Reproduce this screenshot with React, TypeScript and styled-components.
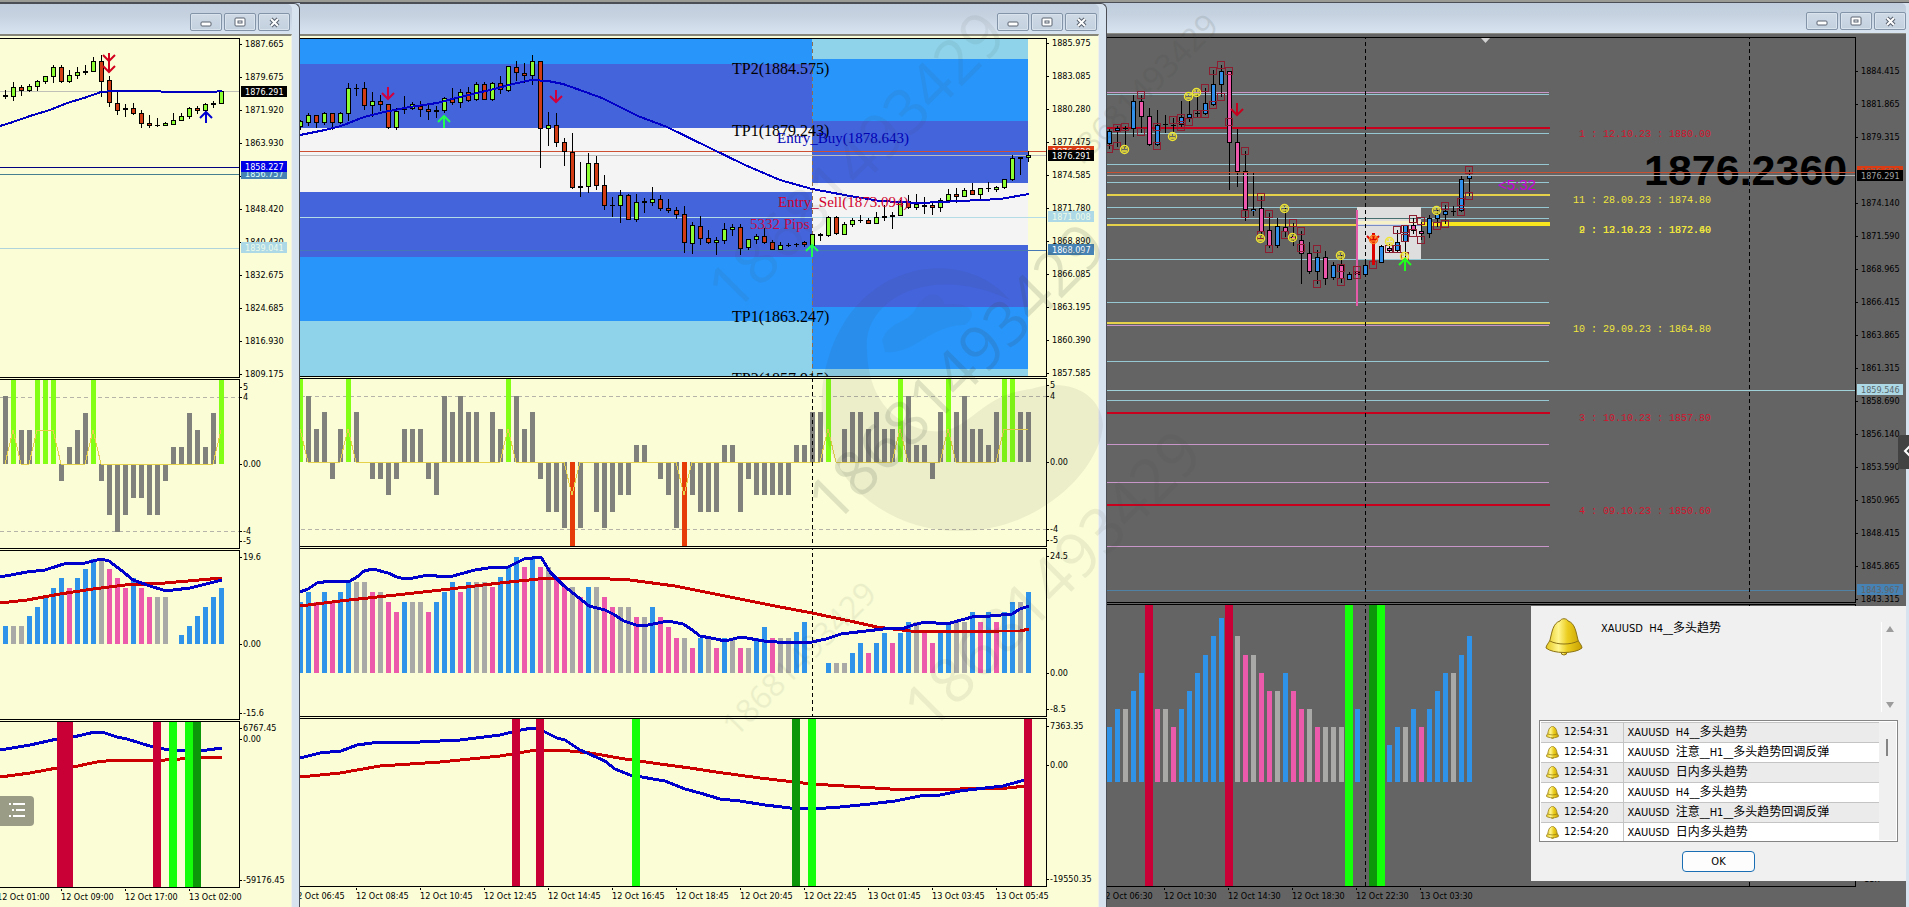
import React from "react";
import styled, { createGlobalStyle, css } from "styled-components";

const FONT_UI = '"DejaVu Sans Condensed", "Noto Sans CJK SC", sans-serif';
const CREAM = "#fafdd5";
const SLATE = "#646464";

const GlobalStyle = createGlobalStyle`
  *, *::before, *::after { box-sizing: border-box; }
  body { margin: 0; background: ${CREAM}; font-family: ${FONT_UI}; overflow: hidden; }
`;

/* ---------- layout ---------- */

const Desk = styled.main`
  position: relative;
  display: flex;
  flex-direction: column;
  min-height: 100vh;
  overflow: hidden;
`;

const TopEdge = styled.div`
  height: 3px;
  background: #9b9b96;
  border-bottom: 1px solid #4b4f55;
`;

const Windows = styled.div`
  flex: 1;
  display: grid;
  grid-template-columns: 300px 807px minmax(0, 1fr);
  background: linear-gradient(#c0cddc, #d8e4f0 30px, ${SLATE} 31px);
`;

const Frame = styled.section<{ $dark?: boolean }>`
  position: relative;
  display: flex;
  flex-direction: column;
  min-width: 0;
  background: #d8e3f0;
  ${(p) =>
    p.$dark
      ? css`
          padding-right: 3px;
        `
      : css`
          border-top: 1px solid #4b4f55;
          border-right: 1px solid #4b4f55;
          border-top-right-radius: 6px;
          padding-right: 7px;
        `}
`;

const TitleBar = styled.header<{ $dark?: boolean }>`
  display: flex;
  justify-content: flex-end;
  gap: 2px;
  height: 30px;
  padding-top: 9px;
  padding-right: ${(p) => (p.$dark ? 0 : 2)}px;
  background: linear-gradient(#c0cddc, #c6d2e0 40%, #d8e4f0);
  border-top-right-radius: 5px;
`;

const CaptionButton = styled.button`
  display: grid;
  place-items: center;
  width: 32px;
  height: 18px;
  padding: 0;
  border: 1px solid #8494a8;
  border-radius: 2px;
  background: linear-gradient(#cfdae6, #c3d0de);
  box-shadow: inset 0 0 0 1px #d9e3ee;
`;

const Client = styled.div<{ $dark?: boolean }>`
  flex: 1;
  display: flex;
  flex-direction: column;
  gap: 1px;
  min-width: 0;
  background: ${(p) => (p.$dark ? SLATE : CREAM)};
  border-top: ${(p) => (p.$dark ? "1px solid #8c8c86" : "2px solid #85857a")};
  border-right: ${(p) => (p.$dark ? "0" : "1px solid #f1f1e8")};
  padding-top: ${(p) => (p.$dark ? 3 : 2)}px;
`;

const PaneRow = styled.div<{ $height: number }>`
  display: flex;
  height: ${(p) => p.$height}px;
`;

const PlotBox = styled.div`
  flex: 1;
  min-width: 0;
  border: solid #000;
  border-width: 1px 1px 1px 0;
  overflow: hidden;
`;

const Drawing = styled.svg`
  display: block;
  width: 100%;
  height: 100%;
  shape-rendering: crispEdges;
`;

const AxisBox = styled.div<{ $width: number }>`
  flex: 0 0 ${(p) => p.$width}px;
  overflow: hidden;
`;

const AxisText = styled.text`
  font-family: "DejaVu Sans Condensed", sans-serif;
  font-size: 9px;
`;

const TimeAxis = styled.div<{ $shift: number }>`
  display: flex;
  overflow: hidden;
  height: 18px;
  & > :first-child { margin-left: ${(p) => -p.$shift}px; }
`;

const TimeLabel = styled.time`
  position: relative;
  flex: 0 0 64px;
  font-size: 9px;
  line-height: 16px;
  white-space: nowrap;
  &::before {
    content: "";
    position: absolute;
    left: 0;
    top: -1px;
    width: 1px;
    height: 3px;
    background: #000;
  }
`;

/* ---------- chart parts ---------- */

const INK = {
  up: "#8cff32", down: "#d23c14", bull: "#2f8fea", bear: "#ee58ac",
  crimson: "#c80036", lime: "#14ff0a", forest: "#0c960a",
  b: "#2f93ea", g: "#a9a9a7", p: "#ec5aac",
  blue: "#0000cc", red: "#cc0000", gray: "#80807c", chart: "#82ff14",
};

type Origin = { x: number; y: number };
type Label = [string, number];
type Tag = { text: string; y: number; fill: string; color: string };

interface PaneProps {
  origin: Origin;
  height: number;
  labels: Label[];
  tags?: Tag[];
  axisX: number;
  axisWidth?: number;
  inset?: number;
  children: React.ReactNode;
}

function Pane({ origin, height, labels, tags = [], axisX, axisWidth = 51, inset = 2, children }: PaneProps) {
  return (
    <PaneRow $height={height}>
      <PlotBox>
        <Drawing>
          <g transform={`translate(${-origin.x} ${-origin.y - 1})`}>{children}</g>
        </Drawing>
      </PlotBox>
      <AxisBox $width={axisWidth}>
        <Drawing>
          <g transform={`translate(${-axisX} ${-origin.y})`}>
            {labels.map(([text, y]) => (
              <g key={text}>
                <rect x={axisX} y={y} width="2" height="1" />
                <AxisText x={axisX + inset} y={y + 3}>{text}</AxisText>
              </g>
            ))}
            {tags.map((t) => (
              <g key={t.text}>
                <rect x={axisX + 1} y={t.y - 5} width="46" height="11" fill={t.fill} />
                <AxisText x={axisX + 5} y={t.y + 4} fill={t.color}>{t.text}</AxisText>
              </g>
            ))}
          </g>
        </Drawing>
      </AxisBox>
    </PaneRow>
  );
}

/* one candle: high, body top, body bottom, low, kind */
type Kind = "u" | "d" | "n" | "b" | "p";
type Candle = [number, number, number, number, Kind];
const BODY: Record<Kind, string> = { u: INK.up, d: INK.down, n: "#000", b: INK.bull, p: INK.bear };

function Candles({ x0, data }: { x0: number; data: Candle[] }) {
  return (
    <g>
      {data.map(([hi, top, bottom, lo, kind], i) => {
        const x = x0 + i * 8;
        if (lo === 0) return null;
        return (
          <g key={i}>
            <rect x={x} y={hi} width="1" height={lo - hi + 1} />
            <rect x={x - 2} y={top} width="5" height={Math.max(1, bottom - top + 1)} />
            {kind !== "n" && (
              <rect x={x - 1} y={top + 1} width="3" height={Math.max(1, bottom - top - 1)} fill={BODY[kind]} />
            )}
          </g>
        );
      })}
    </g>
  );
}

function Line({ pts, color, width = 3 }: { pts: string; color: string; width?: number }) {
  return <polyline points={pts} fill="none" stroke={color} strokeWidth={width} strokeLinejoin="round" />;
}

function HLine({ y, color, x1 = 0, x2 = 4000, w = 1 }: { y: number; color: string; x1?: number; x2?: number; w?: number }) {
  return <rect x={x1} y={y} width={x2 - x1} height={w} fill={color} />;
}

function VDash({ x, color = "#000" }: { x: number; color?: string }) {
  return <path d={`M${x} 0V1000`} transform="translate(.5 0)" stroke={color} strokeDasharray="4 3" />;
}

function Arrow({ x, y, dir, color, len = 12 }: { x: number; y: number; dir: 1 | -1; color: string; len?: number }) {
  const tip = dir === 1 ? y + len : y;
  return (
    <path
      d={`M${x} ${y}V${y + len}M${x - 6} ${tip - dir * 6}L${x} ${tip}L${x + 6} ${tip - dir * 6}`}
      fill="none" stroke={color} strokeWidth="2" shapeRendering="auto"
    />
  );
}

/* signal histogram: numbers are bar values, G / R are full-height signals */
function Signals({ x0, zero, unit, top, bottom, data, hold = [] }: {
  x0: number; zero: number; unit: number; top: number; bottom: number; data: string; hold?: number[];
}) {
  const cells = data.split(" ");
  const trace = cells
    .map((c, i) => `${x0 + i * 8},${c === "G" || hold.includes(i) ? zero - unit * 2 : c === "R" ? zero + unit * 2 : zero}`)
    .join(" ");
  return (
    <g>
      {cells.map((c, i) => {
        const x = x0 + i * 8 - 2;
        if (c === "G") return <rect key={i} x={x} y={top} width="5" height={zero - top} fill={INK.chart} />;
        if (c === "R") return <rect key={i} x={x} y={zero} width="5" height={bottom - zero} fill="#e63c0a" />;
        const h = Math.round(Math.abs(+c) * unit);
        return <rect key={i} x={x} y={+c > 0 ? zero - h : zero} width="5" height={h} fill={INK.gray} />;
      })}
      <Line pts={trace} color="#e6d24a" width={1} />
    </g>
  );
}

/* coloured histogram: "b81" is a blue bar 81 tall */
function Histogram({ x0, base, data }: { x0: number; base: number; data: string }) {
  return (
    <g>
      {data.split(" ").map((c, i) => {
        if (c === "-") return null;
        const h = +c.slice(1);
        return <rect key={i} x={x0 + i * 8 - 2} y={base - h} width="5" height={h} fill={INK[c[0] as "b"]} />;
      })}
    </g>
  );
}

function Stripe({ x, w = 8, color }: { x: number; w?: number; color: string }) {
  return <rect x={x} y="0" width={w} height="1000" fill={color} />;
}

const Levels = ({ hi, lo }: { hi: number; lo: number }) => (
  <g stroke="#b4b4a8" strokeDasharray="4 3">
    <path d={`M0 ${hi}.5H2000`} />
    <path d={`M0 ${lo}.5H2000`} />
  </g>
);

const axisLabels = (start: number, texts: string): Label[] =>
  texts.split(" ").map((t, i): Label => [t, start + i * 33]).filter(([t]) => t !== "-");

function Caption({ dark }: { dark?: boolean }) {
  return (
    <TitleBar $dark={dark}>
      <CaptionButton aria-label="Minimize">
        <svg width="14" height="10"><rect x="2" y="5" width="10" height="4" rx="1" fill="#fff" stroke="#5a6270" /></svg>
      </CaptionButton>
      <CaptionButton aria-label="Restore">
        <svg width="12" height="10">
          <rect x="1" y="1" width="10" height="8" rx="1" fill="#fff" stroke="#5a6270" />
          <rect x="4" y="4" width="4" height="2" fill="#fff" stroke="#5a6270" />
        </svg>
      </CaptionButton>
      <CaptionButton aria-label="Close">
        <svg width="13" height="11">
          <path d="M3 2L10 9M10 2L3 9" stroke="#5a6270" strokeWidth="4" />
          <path d="M3 2L10 9M10 2L3 9" stroke="#fff" strokeWidth="2" />
        </svg>
      </CaptionButton>
    </TitleBar>
  );
}

/* ---------- first window ---------- */

const H1: Candle[] = [
  [90, 95, 96, 98, "n"], [82, 87, 96, 100, "u"], [85, 87, 90, 95, "d"], [84, 86, 90, 91, "u"], [80, 81, 86, 90, "u"],
  [76, 76, 81, 83, "u"], [65, 67, 76, 82, "u"], [65, 67, 81, 82, "d"], [70, 75, 81, 82, "u"], [67, 72, 75, 78, "u"],
  [65, 71, 72, 74, "n"], [57, 61, 71, 71, "u"], [55, 61, 81, 96, "d"], [76, 80, 102, 106, "d"], [92, 103, 110, 114, "d"],
  [104, 108, 109, 116, "n"], [103, 108, 113, 114, "d"], [110, 113, 123, 127, "d"], [115, 123, 125, 127, "d"],
  [118, 125, 125, 126, "n"], [122, 123, 125, 125, "u"], [113, 120, 124, 124, "u"], [113, 116, 120, 120, "u"],
  [107, 108, 116, 118, "u"], [106, 108, 110, 113, "d"], [103, 104, 110, 111, "u"], [101, 103, 104, 107, "n"], [90, 91, 103, 103, "u"],
];

function HourlyWindow() {
  const x = 0;
  return (
    <Frame>
      <Caption />
      <Client>
        <Pane
          origin={{ x, y: 38 }} height={340} axisX={240} inset={5}
          labels={axisLabels(44, "1887.665 1879.675 1871.920 1863.930 1856.175 1848.420 1840.430 1832.675 1824.685 1816.930 1809.175")}
          tags={[
            { text: "1876.291", y: 91, fill: "#000", color: "#fff" },
            { text: "1856.757", y: 173, fill: "#4682b4", color: "#dff" },
            { text: "1858.227", y: 166, fill: "#0000e6", color: "#fff" },
            { text: "1839.041", y: 247, fill: "#add8e6", color: "#eefce8" },
          ]}
        >
          <HLine y={91} color="#c0c0b8" />
          <HLine y={167} color="#000080" />
          <HLine y={174} color="#468090" />
          <HLine y={248} color="#b0d4dc" />
          <Candles x0={5} data={H1} />
          <Line width={2} color="#0000c0" pts="0,126 10,123 33,115 50,110 67,103 84,98 101,92 113,91 157,91 165,92 213,92 222,91" />
          <Arrow x={109} y={53} dir={1} color="#d2001e" len={8} />
          <Arrow x={109} y={60} dir={1} color="#d2001e" />
          <Arrow x={206} y={112} dir={-1} color="#0000d2" len={11} />
        </Pane>
        <Pane origin={{ x, y: 379 }} height={170} axisX={240} inset={3}
          labels={[["5", 387], ["4", 397], ["0.00", 464], ["-4", 531], ["-5", 541]]}>
          <Levels hi={397} lo={531} />
          <Signals x0={5} zero={464} unit={17} top={379} bottom={548}
            data="4 G 2 2 G G G -1 1 2 3 G -1 -3 -4 -3 -2 -2 -3 -3 -1 1 1 3 2 1 3 G" />
        </Pane>
        <Pane origin={{ x, y: 550 }} height={170} axisX={240} inset={3}
          labels={[["19.6", 557], ["0.00", 644], ["-15.6", 713]]}>
          <Histogram x0={5} base={644}
            data="b18 g18 g18 b28 b37 b47 b56 b66 p56 b66 b75 b85 g85 p75 p66 p56 b66 p56 p47 g47 g47 - b9 b18 b28 b37 b47 b56" />
          <Line color={INK.red} pts="0,603 27,600 60,594 93,589 125,585 165,583 222,578" />
          <Line color={INK.blue} pts="0,577 27,572 45,570 67,563 85,563 101,559 109,561 121,570 133,580 150,586 163,590 173,590 190,588 222,580" />
        </Pane>
        <Pane origin={{ x, y: 721 }} height={167} axisX={240} inset={3}
          labels={[["6767.45", 728], ["0.00", 739], ["-59176.45", 880]]}>
          <Line color={INK.red} pts="0,777 30,773 57,768 73,767 97,762 115,760 165,760 180,759 200,758 222,757" />
          <Line color={INK.blue} pts="0,750 30,745 57,739 73,737 95,732 105,733 117,737 127,739 153,747 169,750 200,751 222,748" />
          <Stripe x={57} w={16} color={INK.crimson} />
          <Stripe x={153} color={INK.crimson} />
          <Stripe x={169} color={INK.lime} />
          <Stripe x={185} color={INK.lime} />
          <Stripe x={193} color={INK.forest} />
        </Pane>
        <TimeAxis $shift={3}>
          {["12 Oct 01:00", "12 Oct 09:00", "12 Oct 17:00", "13 Oct 02:00"].map((t) => <TimeLabel key={t}>{t}</TimeLabel>)}
        </TimeAxis>
      </Client>
    </Frame>
  );
}

/* ---------- second window ---------- */

const M15: Candle[] = [
  [120, 121, 126, 129, "u"], [113, 115, 122, 125, "u"], [115, 115, 122, 127, "d"], [112, 113, 122, 124, "u"], [113, 113, 122, 129, "d"],
  [112, 113, 122, 123, "u"], [83, 88, 113, 120, "u"], [84, 88, 88, 95, "n"], [82, 88, 105, 109, "d"], [92, 101, 105, 116, "u"],
  [95, 101, 104, 110, "d"], [104, 104, 127, 128, "d"], [108, 111, 127, 129, "u"], [96, 109, 109, 113, "n"], [102, 104, 108, 109, "u"],
  [101, 106, 109, 116, "d"], [104, 109, 111, 119, "d"], [106, 110, 111, 117, "n"], [97, 98, 110, 112, "u"], [88, 98, 102, 104, "d"],
  [89, 92, 102, 107, "u"], [87, 92, 100, 101, "d"], [82, 84, 99, 100, "u"], [82, 84, 99, 99, "d"], [82, 83, 99, 100, "u"],
  [76, 83, 89, 93, "d"], [66, 66, 90, 91, "u"], [61, 67, 72, 80, "d"], [63, 73, 75, 82, "d"], [55, 61, 75, 84, "u"],
  [61, 61, 128, 167, "d"], [112, 125, 128, 145, "u"], [113, 125, 142, 146, "d"], [138, 142, 151, 165, "d"], [133, 152, 187, 188, "d"],
  [162, 186, 187, 196, "n"], [153, 163, 186, 192, "u"], [156, 163, 185, 189, "d"], [175, 185, 205, 209, "d"], [197, 205, 205, 216, "n"],
  [190, 195, 205, 222, "u"], [194, 195, 219, 219, "d"], [194, 202, 219, 221, "u"], [198, 201, 202, 212, "n"], [187, 199, 202, 205, "u"],
  [195, 199, 208, 210, "d"], [199, 208, 210, 212, "d"], [207, 210, 214, 218, "d"], [206, 214, 242, 252, "d"], [222, 225, 243, 253, "u"],
  [216, 226, 238, 244, "d"], [230, 238, 242, 243, "d"], [237, 240, 242, 254, "u"], [223, 229, 240, 243, "u"], [224, 227, 229, 235, "u"],
  [224, 227, 248, 254, "d"], [239, 239, 247, 249, "u"], [234, 236, 239, 243, "u"], [228, 236, 242, 243, "d"], [240, 242, 249, 249, "d"],
  [242, 245, 249, 249, "u"], [243, 245, 245, 246, "n"], [243, 244, 244, 246, "n"], [241, 242, 244, 246, "d"], [234, 234, 245, 245, "u"],
  [233, 234, 235, 240, "n"], [216, 217, 235, 236, "u"], [216, 217, 233, 234, "d"], [222, 224, 234, 234, "u"], [218, 220, 224, 226, "u"],
  [215, 220, 220, 222, "n"], [218, 220, 223, 223, "d"], [212, 217, 223, 223, "u"], [205, 216, 217, 220, "n"], [212, 215, 216, 228, "n"],
  [200, 202, 215, 215, "u"], [195, 201, 207, 208, "d"], [194, 204, 207, 209, "u"], [197, 205, 206, 213, "n"], [203, 205, 207, 214, "d"],
  [198, 200, 207, 211, "u"], [189, 194, 200, 201, "u"], [188, 194, 196, 202, "d"], [188, 190, 196, 196, "u"], [183, 190, 194, 194, "d"],
  [188, 188, 194, 199, "u"], [182, 188, 188, 191, "n"], [186, 187, 189, 191, "u"], [179, 179, 187, 188, "u"], [155, 158, 179, 180, "u"],
  [157, 157, 158, 174, "n"], [151, 155, 157, 161, "u"],
];

const Note = styled.text<{ $small?: boolean }>`
  font-family: "Liberation Serif", serif;
  font-size: ${(p) => (p.$small ? 15 : 16)}px;
`;

function QuarterHourWindow() {
  const x = 300;
  const bands = (left: number, right: number, edges: number[], colors: string[]) =>
    colors.map((c, i) => (
      <rect key={i} x={left} y={edges[i]} width={right - left} height={edges[i + 1] - edges[i]} fill={c} />
    ));
  const [sky, dodger, royal, white] = ["#8fd3ea", "#2895fa", "#4464dc", "#f4f4f4"];
  return (
    <Frame>
      <Caption />
      <Client>
        <Pane
          origin={{ x, y: 38 }} height={339} axisX={1047} inset={5}
          labels={axisLabels(43, "1885.975 1883.085 1880.280 1877.475 1874.585 1871.780 1868.890 1866.085 1863.195 1860.390 1857.585")}
          tags={[
            { text: "1876.628", y: 151, fill: "#dc3c14", color: "#fff" },
            { text: "1876.291", y: 155, fill: "#000", color: "#fff" },
            { text: "1871.008", y: 216, fill: "#add8e6", color: "#eefce8" },
            { text: "1868.097", y: 249, fill: "#4682b4", color: "#fff" },
          ]}
        >
          {bands(300, 812, [39, 64, 128, 192, 257, 321, 376], [dodger, royal, white, royal, dodger, sky])}
          {bands(812, 1028, [39, 59, 121, 183, 245, 307, 369, 376], [sky, dodger, royal, white, royal, dodger, sky])}
          <VDash x={812} color="#8c6e50" />
          <HLine y={151} color="#cd5032" />
          <HLine y={155} color="#bcbcbc" />
          <HLine y={217} color="#b4dce6" />
          <HLine y={250} color="#4678b4" />
          <Candles x0={300} data={M15} />
          <Line width={2} color="#0000c8" pts="300,135 325,130 341,126 364,117 384,112 410,107 437,103 460,97 490,90 513,84 531,80 548,81 563,84 602,98 638,116 667,127 710,148 745,165 780,180 812,189 850,196 880,201 920,203 960,201 1000,199 1029,194" />
          <Arrow x={388} y={87} dir={1} color="#d2003c" />
          <Arrow x={556} y={90} dir={1} color="#d2003c" />
          <Arrow x={444} y={116} dir={-1} color="#1eff50" />
          <Arrow x={812} y={245} dir={-1} color="#1eff50" />
          <Note x={732} y={74}>TP2(1884.575)</Note>
          <Note x={732} y={136}>TP1(1879.243)</Note>
          <Note x={732} y={322}>TP1(1863.247)</Note>
          <Note x={732} y={384}>TP2(1857.915)</Note>
          <Note $small x={777} y={143} fill="#0000b4">Entry_Buy(1878.643)</Note>
          <Note $small x={778} y={207} fill="#d2002d">Entry_Sell(1873.094)</Note>
          <Note $small x={750} y={229} fill="#c80a46">5332 Pips</Note>
        </Pane>
        <Pane origin={{ x, y: 378 }} height={169} axisX={1047} inset={3}
          labels={[["5", 385], ["4", 396], ["0.00", 462], ["-4", 529], ["-5", 540]]}>
          <Levels hi={396} lo={529} />
          <Signals x0={300} zero={462} unit={16.5} top={379} bottom={546} hold={[90, 91]}
            data="G 4 2 3 -1 2 G 3 0 -1 -1 -2 -1 2 2 2 -1 -2 4 3 4 3 3 0 3 2 G 4 2 3 -1 -3 -3 -4 R -4 0 -3 -4 -3 -2 -2 1 1 0 -1 -2 -4 R -2 -3 -3 -3 1 1 -3 -1 -2 -2 -2 -2 -2 1 1 3 3 G 0 2 3 3 2 3 2 2 G 4 1 1 -1 3 G 3 4 2 2 1 3 G G 3 3" />
          <VDash x={812} />
        </Pane>
        <Pane origin={{ x, y: 548 }} height={169} axisX={1047} inset={3}
          labels={[["24.5", 556], ["0.00", 673], ["-8.5", 709]]}>
          <Histogram x0={300} base={673}
            data="b71 b81 p71 b81 p71 b81 b91 g91 g91 p81 g81 p71 p61 b71 g71 g71 p61 b71 b81 b91 p81 b91 g91 g91 p86 b96 b106 b116 p106 b116 p106 g106 p96 p86 g86 p76 b86 g86 p76 p66 g66 g66 p56 g56 b66 p56 p46 p35 g35 p25 b35 g35 p25 b35 g35 p25 g25 b35 b46 p35 g35 g35 b41 b51 - - b10 g10 g10 b20 b30 p20 b30 b40 p30 b40 b51 g51 p41 p30 b41 b51 g51 g51 b61 p51 b61 p51 b61 b71 g71 b81" />
          <VDash x={812} />
          <Line color={INK.red} pts="300,606 340,601 405,594 450,589 500,583 548,578 590,578 630,580 675,586 710,593 775,606 812,613 850,621 877,627 910,631 950,632 1000,631 1020,631 1029,629" />
          <Line color={INK.blue} pts="300,592 308,589 317,583 330,581 350,581 357,577 364,571 373,569 388,573 397,577 405,579 413,578 428,575 445,577 453,576 475,570 488,568 508,567 516,563 524,559 541,557 550,572 563,585 589,606 605,610 613,614 624,621 636,625 648,625 668,621 683,624 691,629 700,636 716,639 725,641 741,637 764,641 790,643 812,642 826,639 841,634 866,631 892,628 902,629 913,625 925,622 947,624 972,617 990,616 1012,614 1020,609 1029,606" />
        </Pane>
        <Pane origin={{ x, y: 718 }} height={169} axisX={1047} inset={3}
          labels={[["7363.35", 726], ["0.00", 765], ["-19550.35", 879]]}>
          <VDash x={812} />
          <Line color={INK.red} pts="300,777 340,773 380,766 440,762 500,756 530,751 560,750 590,753 625,759 660,764 690,768 716,772 760,778 812,784 860,787 890,789 960,789 1008,788 1025,786" />
          <Line color={INK.blue} pts="300,758 320,753 341,751 357,745 380,742 400,743 460,740 500,735 516,731 532,728 541,730 557,738 565,740 580,750 605,761 615,769 630,775 665,781 685,789 700,793 720,799 740,801 765,805 790,808 812,809 840,807 870,804 895,801 920,796 940,795 960,791 985,788 1003,786 1025,780" />
          <Stripe x={512} color={INK.crimson} />
          <Stripe x={536} color={INK.crimson} />
          <Stripe x={632} color={INK.lime} />
          <Stripe x={792} color={INK.forest} />
          <Stripe x={808} color={INK.lime} />
          <Stripe x={1024} color={INK.crimson} />
        </Pane>
        <TimeAxis $shift={8}>
          {["12 Oct 06:45", "12 Oct 08:45", "12 Oct 10:45", "12 Oct 12:45", "12 Oct 14:45", "12 Oct 16:45", "12 Oct 18:45",
            "12 Oct 20:45", "12 Oct 22:45", "13 Oct 01:45", "13 Oct 03:45", "13 Oct 05:45"].map((t) => (
            <TimeLabel key={t}>{t}</TimeLabel>
          ))}
        </TimeAxis>
      </Client>
    </Frame>
  );
}

/* ---------- third window ---------- */

const M30: Candle[] = [
  [129, 131, 143, 148, "b"], [126, 128, 130, 146, "b"], [126, 128, 128, 147, "n"], [95, 101, 128, 136, "b"], [95, 101, 116, 132, "p"],
  [108, 116, 144, 145, "p"], [110, 125, 144, 145, "b"], [115, 124, 124, 132, "n"], [118, 125, 125, 131, "n"], [101, 117, 124, 126, "b"],
  [101, 114, 117, 121, "b"], [94, 113, 113, 117, "n"], [88, 103, 113, 114, "b"], [70, 84, 104, 105, "b"], [65, 71, 84, 96, "b"],
  [71, 71, 142, 189, "p"], [129, 142, 171, 186, "p"], [151, 171, 209, 220, "p"], [172, 209, 210, 215, "b"], [196, 208, 231, 238, "p"],
  [213, 230, 245, 247, "p"], [218, 226, 245, 247, "b"], [208, 227, 231, 236, "p"], [223, 236, 239, 245, "p"], [231, 240, 253, 283, "p"],
  [242, 253, 271, 273, "p"], [250, 257, 271, 283, "b"], [251, 257, 278, 284, "p"], [262, 265, 277, 279, "b"], [255, 265, 278, 282, "p"],
  [272, 274, 279, 279, "b"], [266, 272, 274, 277, "p"], [261, 265, 274, 275, "b"], [0, 0, 0, 0, "n"], [245, 246, 262, 262, "b"],
  [244, 248, 250, 252, "p"], [230, 242, 250, 251, "b"], [225, 225, 241, 257, "b"], [218, 225, 230, 233, "p"], [222, 231, 233, 239, "p"],
  [215, 218, 233, 237, "b"], [208, 214, 218, 226, "b"], [205, 211, 214, 223, "b"], [206, 211, 211, 215, "n"], [175, 179, 210, 211, "b"],
  [170, 175, 178, 195, "b"],
];

const BOXES: [number, number][] = [
  [1109, 149], [1117, 128], [1117, 146], [1125, 127], [1141, 95], [1141, 132], [1157, 127], [1157, 146], [1173, 120], [1181, 118],
  [1181, 127], [1189, 122], [1197, 114], [1205, 88], [1205, 114], [1213, 71], [1213, 105], [1221, 65], [1221, 97], [1229, 71], [1229, 122],
  [1245, 151], [1245, 214], [1261, 197], [1261, 235], [1269, 214], [1269, 249], [1285, 235], [1293, 223], [1301, 231], [1301, 248],
  [1317, 249], [1317, 284], [1341, 268], [1341, 282], [1357, 270], [1357, 275], [1373, 265], [1389, 249], [1397, 230], [1397, 249],
  [1405, 229], [1405, 238], [1405, 256], [1413, 219], [1413, 233], [1421, 221], [1421, 240], [1437, 226], [1445, 206], [1445, 224],
  [1461, 202], [1461, 212], [1469, 170], [1469, 196],
];
const FACES: [number, number][] = [
  [1124, 149], [1172, 136], [1188, 96], [1196, 92], [1260, 238], [1284, 208], [1292, 237], [1340, 255], [1436, 210], [1389, 241], [1404, 256],
];

function Face({ x, y, color = "#f0e632" }: { x: number; y: number; color?: string }) {
  return (
    <g shapeRendering="auto" stroke={color} fill="none" strokeWidth="1.5">
      <circle cx={x + 0.5} cy={y + 0.5} r="4" />
      <path d={`M${x - 2} ${y - 1}h2M${x + 1} ${y - 1}h2M${x - 2} ${y + 2}h5`} />
    </g>
  );
}

const DateNote = styled.text`
  font-family: "Liberation Mono", monospace;
  font-size: 10px;
`;
const BigPrice = styled.text`
  font-family: "Liberation Sans", sans-serif;
  font-size: 43px;
  font-weight: bold;
`;
const Countdown = styled.text`
  font-family: "Liberation Sans", sans-serif;
  font-size: 15px;
`;

function HalfHourWindow() {
  const x = 1107;
  const end = 1549;
  const lb = "#96c8d4";
  const plum = "#c896c8";
  return (
    <Frame $dark>
      <Caption dark />
      <Client $dark>
        <Pane
          origin={{ x, y: 37 }} height={566} axisX={1856} axisWidth={50} inset={5}
          labels={axisLabels(71, "1884.415 1881.865 1879.315 - 1874.140 1871.590 1868.965 1866.415 1863.865 1861.315 1858.690 1856.140 1853.590 1850.965 1848.415 1845.865 1843.315")}
          tags={[
            { text: "1876.620", y: 171, fill: "#dc3c14", color: "#646464" },
            { text: "1876.291", y: 175, fill: "#000", color: "#a0a0a0" },
            { text: "1859.546", y: 389, fill: "#add8e6", color: "#5a6a6e" },
            { text: "1843.967", y: 589, fill: "#4682b4", color: "#646464" },
          ]}
        >
          {[94, 133, 164, 182, 207, 218, 259, 302, 361, 400].map((y) => <HLine key={y} y={y} x2={end} color={lb} />)}
          {[92, 325, 444, 482, 546].map((y) => <HLine key={y} y={y} x2={end} color={plum} />)}
          {[128, 413, 505].map((y) => <HLine key={y} y={y - 1} x2={end + 1} w={2} color="#c8001e" />)}
          {[195, 225, 323].map((y) => <HLine key={y} y={y - 1} x2={end + 1} w={2} color="#e6d24a" />)}
          <HLine y={390} color="#a0d2da" />
          <HLine y={590} color="#5082a5" />
          <rect x="1357" y="207" width="64" height="52" fill="#dedede" />
          <HLine y={218} x1={1357} x2={1421} color="#466e6e" />
          <HLine y={221} x1={1357} x2={1421} w={3} color="#f5f0c8" />
          <HLine y={225} x1={1357} x2={1421} color="#788cc8" />
          <HLine y={222} x1={1421} x2={end + 1} w={4} color="#fae61e" />
          <VDash x={1365} />
          <VDash x={1749} />
          <Candles x0={1109} data={M30} />
          <rect x="1356" y="210" width="2" height="96" fill="#e65aaa" />
          <g fill="none" stroke="#8c1e32">
            {BOXES.map(([bx, by]) => <rect key={`${bx}-${by}`} x={bx - 3.5} y={by - 3.5} width="7" height="7" />)}
          </g>
          {FACES.map(([fx, fy]) => <Face key={fx} x={fx} y={fy} />)}
          <rect x="1372" y="233" width="3" height="32" fill="#dc0000" />
          <Arrow x={1373} y={234} dir={1} color="#dc0000" len={8} />
          <Face x={1373} y={239} color="#ff7814" />
          <Arrow x={1237} y={103} dir={1} color="#c8001e" />
          <Arrow x={1405} y={259} dir={-1} color="#1eff1e" />
          <path d="M1481 38H1490L1485.500 43Z" fill="#d2d2d2" shapeRendering="auto" />
          <Countdown x={1498} y={190} fill="#c800dc">&lt;5:32</Countdown>
          <BigPrice x={1644} y={185}>1876.2360</BigPrice>
          <HLine y={172} color="#c85032" />
          <HLine y={175} color="#b4b4b4" />
          <g fill="#d2142d">
            <DateNote x={1579} y={137}>1 : 12.10.23 : 1880.00</DateNote>
            <DateNote x={1579} y={421}>3 : 10.10.23 : 1857.80</DateNote>
            <DateNote x={1579} y={514}>4 : 09.10.23 : 1850.60</DateNote>
          </g>
          <g fill="#f0e63c">
            <DateNote x={1573} y={203}>11 : 28.09.23 : 1874.80</DateNote>
            <DateNote x={1579} y={233}>2 : 13.10.23 : 1872.40</DateNote>
            <DateNote x={1579} y={233}>9 : 12.10.23 : 1872.60</DateNote>
            <DateNote x={1573} y={332}>10 : 29.09.23 : 1864.80</DateNote>
          </g>
        </Pane>
        <Pane origin={{ x, y: 604 }} height={283} axisX={1856} axisWidth={50} inset={5} labels={[["-11.7", 879]]}>
          <Histogram x0={1109} base={782}
            data="b55 b73 g73 b91 b109 - p73 g73 p55 b73 b91 b109 b127 b146 b164 - g146 p127 g127 p109 p91 g91 b109 p91 p73 g73 p55 g55 g55 g55 - b73 - - - b37 b55 g55 b73 p55 b73 b91 b109 g109 b127 b146" />
          <VDash x={1365} />
          <VDash x={1749} />
          <Stripe x={1145} color={INK.crimson} />
          <Stripe x={1225} color={INK.crimson} />
          <Stripe x={1345} color={INK.lime} />
          <Stripe x={1369} color={INK.forest} />
          <Stripe x={1377} color={INK.lime} />
        </Pane>
        <TimeAxis $shift={7}>
          {["12 Oct 06:30", "12 Oct 10:30", "12 Oct 14:30", "12 Oct 18:30", "12 Oct 22:30", "13 Oct 03:30"].map((t) => (
            <TimeLabel key={t}>{t}</TimeLabel>
          ))}
        </TimeAxis>
      </Client>
      <AlertDialog />
    </Frame>
  );
}

/* ---------- alert dialog ---------- */

const Dialog = styled.div`
  position: absolute;
  right: 3px;
  bottom: 26px;
  width: 375px;
  padding: 12px 8px 9px;
  background: #f0f0f0;
  display: flex;
  flex-direction: column;
  align-items: center;
`;

const Message = styled.div`
  align-self: stretch;
  display: flex;
  align-items: flex-start;
  height: 102px;
  padding-left: 6px;
`;

const MessageText = styled.p`
  flex: 1;
  margin: 2px 0 0 18px;
  font-size: 11px;
  line-height: 16px;
`;

const Scroller = styled.div`
  display: flex;
  flex-direction: column;
  justify-content: space-between;
  align-items: center;
  width: 17px;
  height: 90px;
  margin: 4px 0 0;
  border-left: 1px solid #fff;
`;

const ScrollButton = styled.button`
  border: 0;
  padding: 4px;
  background: none;
  display: block;
  line-height: 0;
`;

const ListBox = styled.div`
  align-self: stretch;
  display: flex;
  height: 122px;
  padding: 1px;
  border: 1px solid #858585;
  background: #fff;
  overflow: hidden;
`;

const AlertTable = styled.table`
  flex: 1;
  height: 120px;
  border-collapse: collapse;
  font-size: 11px;
  tr { height: 20px; box-shadow: inset 0 1px #c4c4c4; }
  tr:nth-child(odd) { background: #ebebeb; }
  td { padding: 0; white-space: nowrap; line-height: 14px; vertical-align: middle; }
  td:first-child { width: 82px; border-right: 1px solid #c4c4c4; }
  td:last-child { padding-left: 4px; }
`;

const TimeCell = styled.div`
  display: flex;
  align-items: center;
  gap: 5px;
  padding-left: 5px;
`;

const ListScroll = styled.div`
  width: 17px;
  padding: 17px 7px 0;
  background: #f0f0f0;
  &::before { content: ""; display: block; width: 2px; height: 17px; background: #858585; }
`;

const Cjk = styled.span`
  font-family: "Noto Sans CJK SC", sans-serif;
  font-size: 12px;
  line-height: 14px;
`;

const OkButton = styled.button`
  width: 73px;
  height: 21px;
  margin-top: 9px;
  border: 1px solid #1a6fb4;
  border-radius: 4px;
  background: #fdfdfd;
  font: 11px ${FONT_UI};
  padding: 0;
`;

function Mixed({ text }: { text: string }) {
  return <>{text.split(/([\u4e00-\u9fff]+)/).map((part, i) => (i % 2 ? <Cjk key={i}>{part}</Cjk> : part))}</>;
}

function Bell({ size }: { size: number }) {
  return (
    <svg width={size} height={size} viewBox="0 0 38 38" aria-hidden="true">
      <defs>
        <linearGradient id={`bell${size}`} x1="0" x2="1">
          <stop offset="0" stopColor="#e6c81e" />
          <stop offset=".35" stopColor="#fff58c" />
          <stop offset=".6" stopColor="#ebcd1e" />
          <stop offset="1" stopColor="#c8a000" />
        </linearGradient>
      </defs>
      <g fill={`url(#bell${size})`} stroke="#8c7314" strokeWidth={size > 20 ? 1 : 2}>
        <circle cx="19" cy="34" r="3" />
        <path d="M15 3C16 0 22 0 23 3C30 5 31 14 33 22C34 25 37 27 37 30C30 36 8 36 1 30C1 27 4 25 5 22C7 14 8 5 15 3Z" />
        <path d="M5 23C12 27 26 27 33 23" fill="none" />
      </g>
    </svg>
  );
}

const ALERTS: [string, string][] = [
  ["12:54:31", "XAUUSD  H4__多头趋势"],
  ["12:54:31", "XAUUSD  注意__H1__多头趋势回调反弹"],
  ["12:54:31", "XAUUSD  日内多头趋势"],
  ["12:54:20", "XAUUSD  H4__多头趋势"],
  ["12:54:20", "XAUUSD  注意__H1__多头趋势回调反弹"],
  ["12:54:20", "XAUUSD  日内多头趋势"],
];

const Pre = styled.span`
  white-space: pre;
`;

function AlertDialog() {
  return (
    <Dialog role="dialog" aria-label="Alert">
      <Message>
        <Bell size={38} />
        <MessageText><Pre><Mixed text="XAUUSD  H4__多头趋势" /></Pre></MessageText>
        <Scroller>
          <ScrollButton aria-label="Scroll up"><svg width="8" height="6"><path d="M0 6L4 0L8 6Z" fill="#9c9c9c" /></svg></ScrollButton>
          <ScrollButton aria-label="Scroll down"><svg width="8" height="6"><path d="M0 0L4 6L8 0Z" fill="#9c9c9c" /></svg></ScrollButton>
        </Scroller>
      </Message>
      <ListBox>
        <AlertTable>
          <tbody>
            {ALERTS.map(([time, text], i) => (
              <tr key={i}>
                <td><TimeCell><Bell size={13} />{time}</TimeCell></td>
                <td><Pre><Mixed text={text} /></Pre></td>
              </tr>
            ))}
          </tbody>
        </AlertTable>
        <ListScroll />
      </ListBox>
      <OkButton>OK</OkButton>
    </Dialog>
  );
}

/* ---------- overlays ---------- */

const Overlay = styled.svg`
  position: absolute;
  inset: 0;
  width: 100%;
  height: 100%;
  pointer-events: none;
  font-family: "Open Sans", "Noto Sans", sans-serif;
  fill: #3c463c;
`;

const ListToggle = styled.button`
  position: absolute;
  left: 0;
  top: 796px;
  width: 34px;
  height: 30px;
  padding: 0;
  border: 0;
  border-radius: 0 4px 4px 0;
  background: #9a9c86;
`;

const SideToggle = styled.button`
  position: absolute;
  right: 0;
  top: 435px;
  width: 11px;
  height: 34px;
  padding: 0;
  border: 0;
  border-radius: 3px 0 0 3px;
  background: #424242;
  overflow: hidden;
`;

const MARK = "18681493429";

function Watermarks() {
  return (
    <Overlay aria-hidden="true">
      <path opacity=".08" d="M822 392C815 480 890 534 965 531C1040 529 1100 470 1103 425C1101 392 1066 377 1031 389C975 395 968 440 925 430C890 422 868 395 867 350C862 300 930 262 1010 300C960 240 835 262 822 392Z" />
      <path opacity=".05" d="M882 340C890 320 905 325 915 310C925 290 940 290 945 305C970 300 980 315 965 325C930 325 915 355 885 352Z" />
      <text opacity=".14" fontSize="62" fontWeight="500" transform="translate(834 526) rotate(-45)">{MARK}</text>
      <text opacity=".07" fontSize="62" transform="translate(734 314) rotate(-45)">{MARK}</text>
      <text opacity=".08" fontSize="62" transform="translate(930 733) rotate(-45)">{MARK}</text>
      <text opacity=".07" fontSize="32" transform="translate(736 738) rotate(-45)">{MARK}</text>
      <text opacity=".12" fontSize="32" transform="translate(1078 170) rotate(-45)">{MARK}</text>
    </Overlay>
  );
}

export default function App() {
  return (
    <Desk>
      <GlobalStyle />
      <TopEdge />
      <Windows>
        <HourlyWindow />
        <QuarterHourWindow />
        <HalfHourWindow />
      </Windows>
      <Watermarks />
      <ListToggle aria-label="List">
        <svg width="18" height="16" stroke="#fff" strokeWidth="2">
          <path d="M1 2h2M5 2h12M4 8h2M8 8h9M1 14h2M5 14h12" />
        </svg>
      </ListToggle>
      <SideToggle aria-label="Expand">
        <svg width="11" height="14"><path d="M12 2L7 7L12 12" fill="none" stroke="#fff" strokeWidth="2" /></svg>
      </SideToggle>
    </Desk>
  );
}
